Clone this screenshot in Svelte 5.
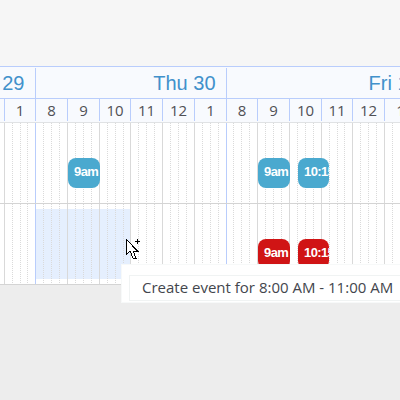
<script lang="ts">
  type Hour = { label: string; width: number; slots: number[]; dayEnd?: boolean };
  type Event = { start: number; width: number; label: string };

  const days = [
    { label: 'Wed 29', width: 36 },
    { label: 'Thu 30', width: 191 },
    { label: 'Fri 1', width: 193 },
  ];

  const hours: Hour[] = [
    { label: '',   width: 5,  slots: [] },
    { label: '1',  width: 31, slots: [7, 15, 22], dayEnd: true },
    { label: '8',  width: 32, slots: [7, 15, 23] },
    { label: '9',  width: 32, slots: [7, 15, 23] },
    { label: '10', width: 31, slots: [7, 15, 23] },
    { label: '11', width: 32, slots: [7, 15, 23] },
    { label: '12', width: 32, slots: [7, 15, 23] },
    { label: '1',  width: 32, slots: [7, 15, 23], dayEnd: true },
    { label: '8',  width: 31, slots: [6, 14, 22] },
    { label: '9',  width: 32, slots: [7, 15, 23] },
    { label: '10', width: 32, slots: [7, 15, 23] },
    { label: '11', width: 31, slots: [7, 15, 22] },
    { label: '12', width: 32, slots: [7, 15, 23] },
    { label: '1',  width: 32, slots: [7, 15, 23], dayEnd: true },
  ];

  const friday: Event[] = [
    { start: 258, width: 32, label: '9am' },
    { start: 298, width: 31, label: '10:15' },
  ];

  const rows = [
    { color: 'blue', selected: false, events: [{ start: 68, width: 32, label: '9am' }, ...friday] },
    { color: 'red',  selected: true,  events: friday },
  ];
</script>

<div class="page">
  <div class="scheduler">
    <div class="days">
      {#each days as day}
        <div class="day" style="width: {day.width}px">{day.label}</div>
      {/each}
    </div>
    <div class="hours">
      {#each hours as hour}
        <div class="hour" style="width: {hour.width}px">{hour.label}</div>
      {/each}
    </div>
    {#each rows as row}
      <div class="row">
        {#if row.selected}
          <div class="selection"></div>
        {/if}
        {#each hours as hour}
          <div class="cell" class:day-end={hour.dayEnd} style="width: {hour.width}px">
            {#each hour.slots as slot}
              <i class="slot" style="left: {slot}px"></i>
            {/each}
          </div>
        {/each}
        {#each row.events as event}
          <div class="event {row.color}" style="left: {event.start}px; width: {event.width}px">
            <span>{event.label}</span>
          </div>
        {/each}
      </div>
    {/each}
  </div>

  <div class="tooltip">
    <div class="tooltip-text">Create event for 8:00 AM - 11:00 AM</div>
  </div>

  <svg class="cursor" width="16" height="22" viewBox="0 0 16 22" shape-rendering="crispEdges">
    <path d="M.5 .5v15l3.500-3.500 3 7h3l-3-7h4.500z" fill="#fff" stroke="#000" />
    <path d="M9 2.500h5M11.500 0v5" stroke="#000" />
  </svg>
</div>

<style>
  :global(body) {
    overflow: hidden;
  }
  .page {
    position: relative;
    box-sizing: border-box;
    width: 400px;
    height: 400px;
    padding-top: 66px;
    overflow: hidden;
    background: linear-gradient(#f6f6f6 66px, #ededed 66px);
    font-family: "Open Sans", sans-serif;
  }
  .scheduler {
    border-top: 1px solid #b9cdfc;
    background: #fff;
  }
  .days,
  .hours,
  .row {
    display: flex;
    box-sizing: border-box;
  }
  .days {
    height: 32px;
    padding-top: 1px;
    border-bottom: 1px solid #b9cdfc;
    background: #f8fafe;
  }
  .day,
  .hour,
  .cell {
    box-sizing: border-box;
    flex: none;
    border-right: 1px solid #b9cdfc;
  }
  .day {
    display: flex;
    justify-content: flex-end;
    padding-right: 10.5px;
    font: 20px/30px "Liberation Sans", Arial, sans-serif;
    color: #4191cb;
    white-space: nowrap;
  }
  .hours {
    height: 24px;
    border-bottom: 1px solid #e0e2e4;
    background: #f8fafe;
  }
  .hour {
    height: 22px;
    font-size: 15px;
    line-height: 23px;
    text-align: center;
    color: #505055;
  }
  .row {
    position: relative;
    height: 81px;
    border-bottom: 1px solid #d4d4d4;
  }
  .cell {
    position: relative;
    border-right-color: #d9d9d9;
  }
  .cell.day-end {
    border-right-color: #b9cdfc;
  }
  .slot {
    position: absolute;
    top: 0;
    bottom: 0;
    width: 1px;
    background: repeating-linear-gradient(#dadada 0 1px, transparent 1px 2px);
  }
  .selection {
    position: absolute;
    top: 5px;
    left: 36px;
    width: 95px;
    height: 70px;
    background: #e5effe;
  }
  .event {
    position: absolute;
    top: 35px;
    box-sizing: border-box;
    height: 30px;
    padding-left: 6px;
    overflow: hidden;
    border-radius: 8px;
    font: bold 13px/27px "Liberation Sans", Arial, sans-serif;
    letter-spacing: -0.6px;
    color: #fff;
    white-space: nowrap;
  }
  .blue {
    background: #4aa9cf;
  }
  .red {
    background: #d01415;
  }
  .tooltip {
    position: absolute;
    top: 264px;
    left: 121px;
    box-sizing: border-box;
    width: 290px;
    height: 39px;
    padding: 10px 0 0 7px;
    border: 1px solid #f7f9f9;
    background: #fff;
  }
  .tooltip-text {
    box-sizing: border-box;
    height: 26px;
    padding-left: 12px;
    border: 1px solid #f0f3f3;
    font-size: 15px;
    line-height: 22px;
    color: #43464d;
    white-space: nowrap;
  }
  .cursor {
    position: absolute;
    top: 239px;
    left: 126px;
  }
</style>
